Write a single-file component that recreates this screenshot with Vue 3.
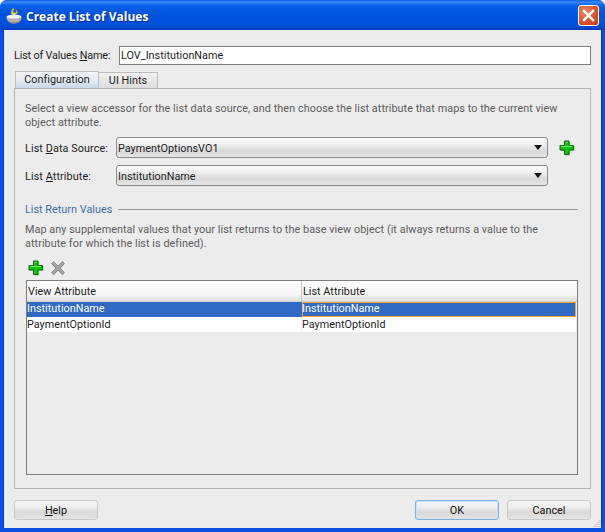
<script setup>
const rows = [
  { view: 'InstitutionName', list: 'InstitutionName', selected: true },
  { view: 'PaymentOptionId', list: 'PaymentOptionId', selected: false }
]
const plusPath = 'M5.5 1h4.5v4.500h4.500v4.500h-4.500v4.500h-4.500v-4.500h-4.500v-4.500h4.500z'
</script>

<template>
  <div class="window">
    <header class="titlebar">
      <svg class="cup" width="18" height="18" viewBox="0 0 18 18">
        <path d="M8 1c3 1-2 3 1 4.500 2 1 3-1 1.500-2.500 4 2 1 5-2 5-3 0-3-3-.5-7z" fill="#f2d04a" stroke="#b08a20" stroke-width=".5" />
        <ellipse cx="9" cy="10" rx="7.500" ry="2.500" fill="#f4f4f0" />
        <path d="M1.500 10c0 4 3 6.500 7.500 6.500s7.500-2.500 7.500-6.500c-2 2-13 2-15 0z" fill="#b4b0a4" />
        <path d="M4 14c2 2 7 2 10 0-1 2-3 2.500-5 2.500s-4-.5-5-2.500z" fill="#77736a" />
      </svg>
      <span class="title">Create List of Values</span>
      <button class="close" aria-label="Close">
        <svg width="13" height="13" viewBox="0 0 13 13"><path d="M2 2l9 9M11 2l-9 9" stroke="#fff" stroke-width="2.400" stroke-linecap="square" fill="none" /></svg>
      </button>
    </header>

    <main class="client">
      <div class="name-row">
        <label class="name-label">List of Values <u>N</u>ame:</label>
        <div class="text-input">LOV_InstitutionName</div>
      </div>

      <div class="tabs">
        <div class="tab active">Configuration</div>
        <div class="tab">UI Hints</div>
      </div>

      <section class="panel">
        <p class="help first">Select a view accessor for the list data source, and then choose the list attribute that maps to the current view object attribute.</p>

        <div class="field-row source-row">
          <label class="field-label">List <u>D</u>ata Source:</label>
          <div class="combo"><span>PaymentOptionsVO1</span><i class="arrow"></i></div>
          <svg class="icon add-source" width="16" height="16" viewBox="0 0 16 16">
            <path :d="plusPath" transform="translate(1 1)" fill="#8a9a8a" opacity=".55" />
            <path :d="plusPath" fill="#0cc40c" stroke="#066f06" stroke-width="1" />
            <path d="M6.500 2.500h2M2 6.500h11" stroke="#7cf07c" stroke-width="1" />
          </svg>
        </div>
        <div class="field-row attr-row">
          <label class="field-label">List <u>A</u>ttribute:</label>
          <div class="combo"><span>InstitutionName</span><i class="arrow"></i></div>
        </div>

        <div class="group-head">
          <span>List Return Values</span><i class="rule"></i>
        </div>
        <p class="help second">Map any supplemental values that your list returns to the base view object (it always returns a value to the attribute for which the list is defined).</p>

        <div class="toolbar">
          <svg width="16" height="16" viewBox="0 0 16 16">
            <path :d="plusPath" transform="translate(1 1)" fill="#8a9a8a" opacity=".55" />
            <path :d="plusPath" fill="#0cc40c" stroke="#066f06" stroke-width="1" />
            <path d="M6.500 2.500h2M2 6.500h11" stroke="#7cf07c" stroke-width="1" />
          </svg>
          <svg width="16" height="16" viewBox="0 0 16 16">
            <path d="M3.500 2.500 8 7l4.500-4.500 2 2L10 9l4.500 4.500-2 2L8 11l-4.500 4.500-2-2L6 9 1.500 4.500z" fill="#c4c4c4" />
            <path d="M3.500 1.500 8 6l4.500-4.500 2 2L10 8l4.500 4.500-2 2L8 10l-4.500 4.500-2-2L6 8 1.500 3.500z" fill="#a3a3a3" stroke="#868686" stroke-width=".8" />
          </svg>
        </div>

        <div class="table">
          <div class="thead">
            <div class="th first-col">View Attribute</div>
            <div class="th">List Attribute</div>
          </div>
          <div v-for="row in rows" :key="row.view" class="tr" :class="{ selected: row.selected }">
            <div class="td first-col">{{ row.view }}</div>
            <div class="td" :class="{ focused: row.selected }">{{ row.list }}</div>
          </div>
        </div>
      </section>

      <footer class="buttons">
        <button class="btn"><u>H</u>elp</button>
        <span class="spacer"></span>
        <button class="btn default">OK</button>
        <button class="btn">Cancel</button>
      </footer>
      <svg class="grip" width="9" height="9" viewBox="0 0 9 9">
        <path d="M8 1v1M6 3v1M8 3v1M4 5v1M6 5v1M8 5v1M2 7v1M4 7v1M6 7v1M8 7v1" stroke="#a9a9a0" stroke-width="1" />
      </svg>
    </main>
  </div>
</template>

<style>
html, body { margin: 0; background: #fff; }
</style>

<style scoped>
.window {
  width: 605px;
  height: 532px;
  box-sizing: border-box;
  display: flex;
  flex-direction: column;
  background: #0a4fe0;
  border-radius: 7px 7px 0 0;
  overflow: hidden;
  font-family: Roboto, "Liberation Sans", Arial, sans-serif;
  font-size: 10.800px;
  letter-spacing: 0.03px;
  color: #1c1c1c;
}
.titlebar {
  height: 30px;
  flex: none;
  display: flex;
  align-items: center;
  padding: 0 6px 0 5px;
  box-sizing: border-box;
  background: linear-gradient(180deg, #0a5ae6 0, #3c8cf4 2px, #0a62ea 5px, #0053dd 14px, #0050da 24px, #0248c8 28px, #0338b8 30px);
}
.cup { flex: none; margin: 2px 3px 0 0; }
.title {
  color: #fff;
  font-family: "Open Sans", "Liberation Sans", sans-serif;
  font-weight: 700;
  font-size: 12px;
  letter-spacing: 0;
  margin-top: 3px;
  text-shadow: 1px 1px 0 #0a2a90;
}
.close {
  margin-left: auto;
  width: 21px;
  height: 21px;
  padding: 0;
  display: flex;
  align-items: center;
  justify-content: center;
  border: 1px solid #fff;
  border-radius: 3px;
  background: radial-gradient(circle at 35% 30%, #e88a68, #d5502a 60%, #c03a1a);
}
.client {
  position: relative;
  flex: 1;
  margin: 0 4px 4px;
  padding: 16px 10px 0;
  background: #ececec;
  box-shadow: -1px 0 0 #0838c8, 1px 0 0 #0838c8;
  display: flex;
  flex-direction: column;
}
.name-row { display: flex; align-items: center; height: 19px; }
.name-label { width: 105px; flex: none; white-space: nowrap; letter-spacing: -0.15px; }
.text-input {
  flex: 1;
  height: 19px;
  box-sizing: border-box;
  border: 1px solid #7e7e7e;
  background: #fff;
  padding-left: 1px;
  line-height: 17px;
}
.tabs { display: flex; margin-top: 6px; padding-left: 1px; height: 17px; align-items: flex-end; }
.tab {
  height: 16px;
  line-height: 15px;
  box-sizing: border-box;
  border: 1px solid #bdbdbd;
  border-left: 0;
  border-bottom: 0;
  background: linear-gradient(180deg, #f2f2f2, #dcdcdc);
  text-align: center;
  width: 59px;
  white-space: nowrap;
}
.tab.active {
  width: 84px;
  height: 17px;
  line-height: 16px;
  border-left: 1px solid #bdbdbd;
  background: linear-gradient(180deg, #f2f5f8 0, #e6ecf3 50%, #c6d8ec 100%);
}
.panel {
  height: 401px;
  box-sizing: border-box;
  border: 1px solid #b5b5b5;
  padding: 13px 12px 0 10px;
  display: flex;
  flex-direction: column;
}
.help { margin: 0; line-height: 13.500px; color: #5c5c5c; letter-spacing: 0.07px; }
.help.first { width: 540px; }
.field-row { display: flex; align-items: center; height: 21px; }
.source-row { margin-top: 8px; }
.attr-row { margin-top: 7px; }
.field-label { width: 91px; flex: none; white-space: nowrap; margin-top: 2px; letter-spacing: 0.1px; }
.combo {
  width: 432px;
  height: 21px;
  box-sizing: border-box;
  flex: none;
  border: 1px solid #8a8a8a;
  border-radius: 3px;
  background: linear-gradient(180deg, #fafafa 0, #ececec 40%, #d8d8d8 70%, #e8e8e8 100%);
  display: flex;
  align-items: center;
  justify-content: space-between;
  padding: 0 5px 0 1px;
}
.combo span { margin-top: 2px; }
.arrow {
  width: 0;
  height: 0;
  border-left: 4px solid transparent;
  border-right: 4px solid transparent;
  border-top: 5px solid #111;
}
.add-source { margin-left: 11px; flex: none; }
.group-head { display: flex; align-items: center; margin-top: 16px; height: 14px; color: #3a6ea5; }
.rule { flex: 1; height: 1px; background: #9a9a9a; margin-left: 6px; }
.help.second { margin-top: 7px; width: 540px; }
.toolbar { display: flex; gap: 6px; margin: 10px 0 4px 3px; height: 16px; }
.table {
  margin-left: 1px;
  width: 552px;
  height: 195px;
  box-sizing: border-box;
  border: 1px solid #7e7e7e;
  background: #ececec;
}
.thead {
  display: flex;
  height: 21px;
  background: linear-gradient(180deg, #fff 0, #f4f4f4 70%, #dedede 100%);
  border-bottom: 1px solid #d0d0d0;
  box-sizing: border-box;
}
.th { flex: 1; line-height: 22px; padding-left: 1px; }
.first-col { flex: none; width: 275px; box-sizing: border-box; border-right: 1px solid #c8c8c8; }
.tr { display: flex; height: 15px; margin-right: 1px; background: #fff; }
.td { flex: 1; line-height: 15px; box-sizing: border-box; }
.tr .first-col { border-right-color: #ececec; }
.tr.selected { background: #316ac5; color: #fff; }
.tr.selected .td { line-height: 13px; }
.tr.selected .first-col { border-right: 1px solid #316ac5; }
.focused { box-shadow: inset 0 0 0 1px #f5a623; }
.buttons { display: flex; gap: 8px; margin-top: 11px; height: 20px; }
.spacer { flex: 1; }
.btn {
  width: 84px;
  height: 20px;
  padding: 0;
  font: inherit;
  letter-spacing: inherit;
  color: #111;
  border: 1px solid #c8c8c8;
  border-radius: 3px;
  background: linear-gradient(180deg, #f6f6f6 0, #eeeeee 35%, #d8d8d8 65%, #e4e4e4 100%);
}
.btn.default { border-color: #7fb0e0; box-shadow: inset 0 0 0 1px #cfe2f4; }
.grip { position: absolute; right: 0; bottom: 0; }
</style>
